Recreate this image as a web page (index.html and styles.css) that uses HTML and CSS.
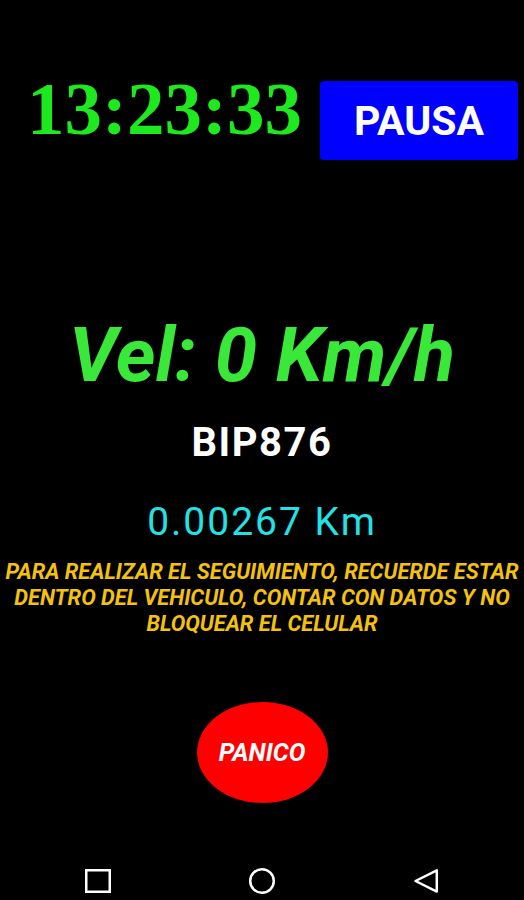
FILE: index.html
```html
<!DOCTYPE html>
<html lang="es">
<head>
    <meta charset="UTF-8">
    <meta content="width=device-width, initial-scale=1.0" name="viewport">
    <title>Seguimiento</title>
    <link rel="stylesheet" href="styles.css">
</head>
<body>
<div class="screen">
    <div class="top">
        <div class="clock">13:23:33</div>
        <a class="pause" href="javascript:">PAUSA</a>
    </div>

    <div class="speed">Vel: 0 Km/h</div>
    <div class="plate">BIP876</div>
    <div class="distance">0.00267 Km</div>

    <p class="notice">
        <span>PARA REALIZAR EL SEGUIMIENTO, RECUERDE ESTAR</span><br>
        <span>DENTRO DEL VEHICULO, CONTAR CON DATOS Y NO</span><br>
        <span>BLOQUEAR EL CELULAR</span>
    </p>

    <a class="panic" href="javascript:">PANICO</a>

    <div class="navbar">
        <svg class="nav-icon" viewBox="0 0 28 28" width="28" height="28">
            <rect x="2.25" y="3.25" width="23.5" height="21.5" fill="none" stroke="#fff" stroke-width="2.5"/>
        </svg>
        <svg class="nav-icon" viewBox="0 0 28 28" width="28" height="28">
            <circle cx="14" cy="14" r="11.8" fill="none" stroke="#fff" stroke-width="2.5"/>
        </svg>
        <svg class="nav-icon" viewBox="0 0 28 28" width="28" height="28">
            <polygon points="3.5,14 24.8,3.4 24.8,24.6" fill="none" stroke="#fff" stroke-width="2.5" stroke-linejoin="round"/>
        </svg>
    </div>
</div>
</body>
</html>
```

FILE: styles.css
```css
body {
    margin: 0;
    background: #000;
    font-family: Roboto, "Liberation Sans", sans-serif;
}

.screen {
    display: flex;
    flex-direction: column;
    width: 524px;
    height: 900px;
    overflow: hidden;
}

.top {
    display: flex;
    justify-content: space-between;
    align-items: flex-start;
    padding: 72px 6px 0 27px;
}

.clock {
    font-family: "Liberation Serif", serif;
    font-size: 75px;
    font-weight: bold;
    line-height: 74px;
    color: #1ee81e;
}

.pause {
    display: flex;
    align-items: center;
    justify-content: center;
    width: 198px;
    height: 79px;
    margin-top: 9px;
    border-radius: 4px;
    background: #0000fe;
    color: #fff;
    font-size: 41px;
    font-weight: bold;
    text-decoration: none;
}

.speed {
    margin-top: 155px;
    font-size: 76px;
    font-weight: bold;
    font-style: italic;
    line-height: 80px;
    text-align: center;
    color: #3ae83a;
}

.plate {
    margin-top: 26px;
    font-size: 40px;
    font-weight: bold;
    line-height: 44px;
    letter-spacing: 1.5px;
    text-align: center;
    color: #fff;
}

.distance {
    margin-top: 35px;
    font-size: 39px;
    line-height: 44px;
    letter-spacing: 2px;
    text-align: center;
    color: #22e2e6;
}

.notice {
    margin: 15px 0 0;
    font-size: 21.8px;
    font-weight: bold;
    font-style: italic;
    line-height: 26px;
    text-align: center;
    color: #f4c20d;
}

.notice span {
    white-space: nowrap;
}

.panic {
    display: flex;
    align-items: center;
    justify-content: center;
    width: 131px;
    height: 101px;
    margin: 65px auto 0;
    border-radius: 50%;
    background: #fe0000;
    color: #fff;
    font-size: 25px;
    font-weight: bold;
    font-style: italic;
    text-decoration: none;
}

.navbar {
    display: grid;
    grid-template-columns: repeat(3, 164px);
    justify-content: center;
    justify-items: center;
    align-items: center;
    height: 38px;
    margin-top: auto;
}

.nav-icon {
    display: block;
}
```
